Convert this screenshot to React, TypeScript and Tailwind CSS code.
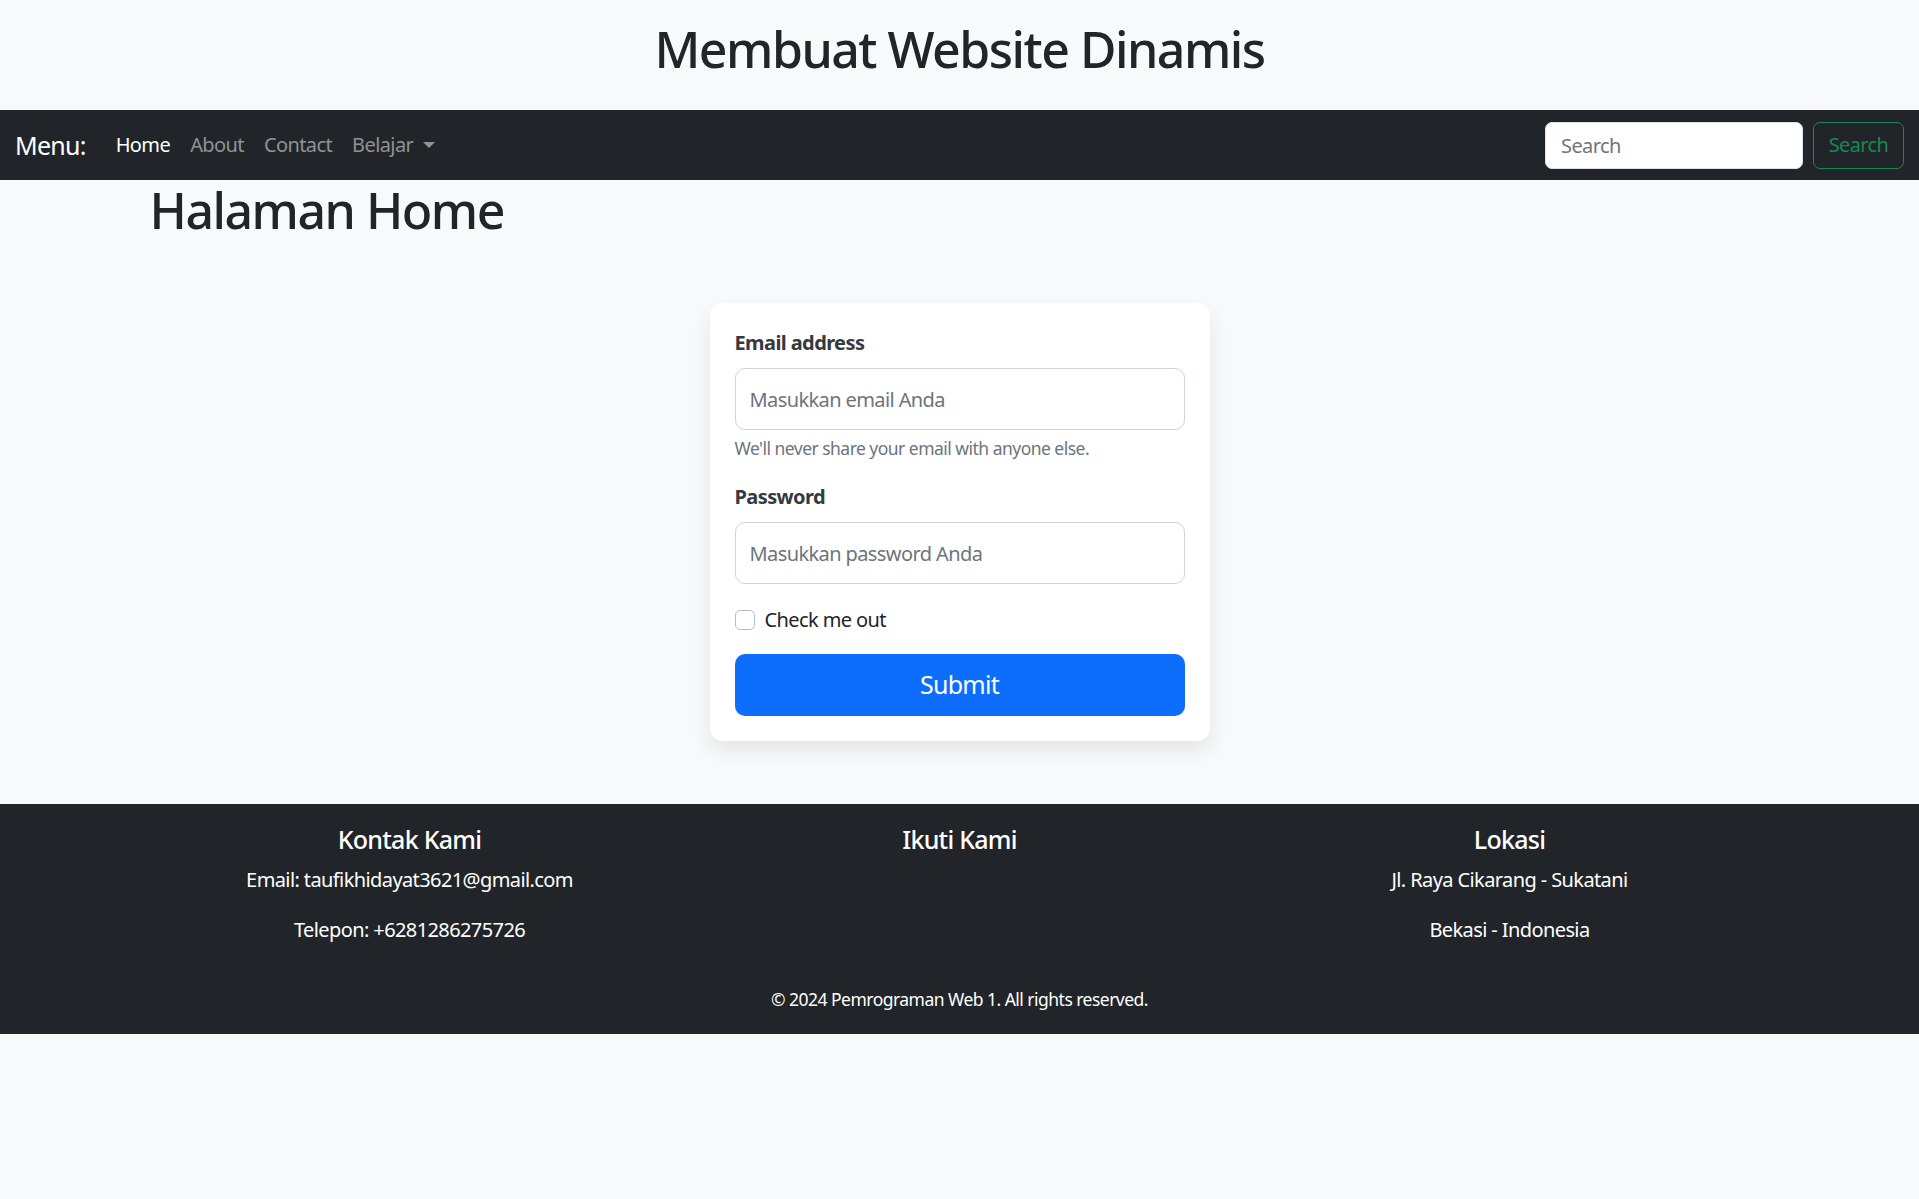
import React from "react";

export default function App() {
  return (
    <div className="min-h-[1199px] bg-[#f8f9fa] text-[#212529] font-['Noto_Sans',sans-serif]">
      <header className="h-[110px] flex items-start justify-center pt-[19px]">
        <h1 className="text-[50px] leading-[60px] font-medium tracking-[-0.03em]">Membuat Website Dinamis</h1>
      </header>

      <nav className="h-[70px] bg-[#212529] flex items-center justify-between px-[15px]">
        <div className="flex items-center">
          <span className="text-[25px] text-white mr-[20px] leading-[37px] tracking-[-0.03em]">Menu:</span>
          <ul className="flex items-center text-[20px]">
            <li className="px-[10px] text-white tracking-[-0.03em]">Home</li>
            <li className="px-[10px] text-[#909294] tracking-[-0.03em]">About</li>
            <li className="px-[10px] text-[#909294] tracking-[-0.03em]">Contact</li>
            <li className="px-[10px] text-[#909294] flex items-center tracking-[-0.03em]">
              Belajar
              <span className="ml-[10px] w-0 h-0 border-l-[6px] border-r-[6px] border-t-[6px] border-l-transparent border-r-transparent border-t-[#909294]" />
            </li>
          </ul>
        </div>
        <form className="flex items-center gap-[10px]" onSubmit={(e) => e.preventDefault()}>
          <input
            type="search"
            placeholder="Search"
            className="w-[258px] h-[47px] bg-white rounded-[7px] border border-[#dee2e6] px-[15px] text-[20px] tracking-[-0.03em] placeholder:text-[#6c757d] outline-none"
          />
          <button
            type="submit"
            className="w-[91px] h-[47px] rounded-[7px] border border-[#198754] text-[#198754] text-[20px] tracking-[-0.03em]"
          >
            Search
          </button>
        </form>
      </nav>

      <main className="max-w-[1650px] mx-auto px-[15px]">
        <h2 className="text-[50px] leading-[60px] font-medium tracking-[-0.03em]">Halaman Home</h2>
        <div className="flex justify-center mt-[63px]">
          <div className="w-[500px] bg-white rounded-[12px] shadow-[0_10px_20px_rgba(0,0,0,0.08)] p-[25px]">
            <label className="block text-[20px] leading-[30px] font-bold text-[#343a40] mb-[10px] tracking-[-0.03em]">Email address</label>
            <input
              type="email"
              placeholder="Masukkan email Anda"
              className="block w-full h-[62px] rounded-[10px] border border-[#ced4da] px-[14px] text-[20px] tracking-[-0.03em] placeholder:text-[#6c757d] outline-none"
            />
            <p className="text-[17.5px] leading-[26px] text-[#6c757d] mt-[5px] tracking-[-0.03em]">We'll never share your email with anyone else.</p>
            <label className="block text-[20px] leading-[30px] font-bold text-[#343a40] mt-[21px] mb-[10px] tracking-[-0.03em]">Password</label>
            <input
              type="password"
              placeholder="Masukkan password Anda"
              className="block w-full h-[62px] rounded-[10px] border border-[#ced4da] px-[14px] text-[20px] tracking-[-0.03em] placeholder:text-[#6c757d] outline-none"
            />
            <label className="flex items-center mt-[21px] text-[20px] leading-[30px] tracking-[-0.03em]">
              <span className="w-[20px] h-[20px] border border-[#b9bec3] rounded-[5px] bg-white mr-[10px]" />
              Check me out
            </label>
            <button className="mt-[19px] w-full h-[62px] rounded-[10px] bg-[#0d6efd] text-white text-[25px] tracking-[-0.03em]">Submit</button>
          </div>
        </div>
      </main>

      <footer className="mt-[63px] bg-[#212529] text-white pt-[20px] pb-[22px]">
        <div className="max-w-[1650px] mx-auto grid grid-cols-3 text-center">
          <div>
            <h5 className="text-[25px] leading-[30px] font-medium mb-[11px] tracking-[-0.03em]">Kontak Kami</h5>
            <p className="text-[20px] leading-[30px] mb-[20px] tracking-[-0.03em]">Email: taufikhidayat3621@gmail.com</p>
            <p className="text-[20px] leading-[30px] mb-[20px] tracking-[-0.03em]">Telepon: +6281286275726</p>
          </div>
          <div>
            <h5 className="text-[25px] leading-[30px] font-medium mb-[11px] tracking-[-0.03em]">Ikuti Kami</h5>
          </div>
          <div>
            <h5 className="text-[25px] leading-[30px] font-medium mb-[11px] tracking-[-0.03em]">Lokasi</h5>
            <p className="text-[20px] leading-[30px] mb-[20px] tracking-[-0.03em]">Jl. Raya Cikarang - Sukatani</p>
            <p className="text-[20px] leading-[30px] mb-[20px] tracking-[-0.03em]">Bekasi - Indonesia</p>
          </div>
        </div>
        <p className="text-center text-[17.5px] leading-[26px] mt-[21px] tracking-[-0.03em]">© 2024 Pemrograman Web 1. All rights reserved.</p>
      </footer>
    </div>
  );
}
